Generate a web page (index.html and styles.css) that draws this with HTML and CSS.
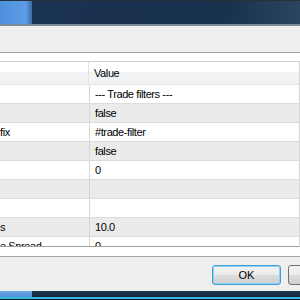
FILE: index.html
```html
<!DOCTYPE html>
<html lang="en">

<head>
    <meta charset="UTF-8">
    <meta name="viewport" content="width=device-width, initial-scale=1.0">
    <link rel="stylesheet" href="styles.css">
</head>

<body>
    <div class="titlebar">
        <div class="title-glow"></div>
        <div class="title-dark"></div>
    </div>

    <div class="toolbar"></div>

    <div class="frame">
        <div class="grid">
            <div class="row header">
                <div class="name"></div>
                <div class="value">Value</div>
            </div>
            <div class="row">
                <div class="name"></div>
                <div class="value">--- Trade filters ---</div>
            </div>
            <div class="row alt">
                <div class="name"></div>
                <div class="value">false</div>
            </div>
            <div class="row">
                <div class="name">fix</div>
                <div class="value">#trade-filter</div>
            </div>
            <div class="row alt">
                <div class="name"></div>
                <div class="value">false</div>
            </div>
            <div class="row">
                <div class="name"></div>
                <div class="value">0</div>
            </div>
            <div class="row alt">
                <div class="name"></div>
                <div class="value"></div>
            </div>
            <div class="row">
                <div class="name"></div>
                <div class="value"></div>
            </div>
            <div class="row alt">
                <div class="name">s</div>
                <div class="value">10.0</div>
            </div>
            <div class="row">
                <div class="name">e Spread</div>
                <div class="value">0</div>
            </div>
        </div>
    </div>

    <div class="buttons">
        <button class="btn default">OK</button>
        <button class="btn">Cancel</button>
    </div>

    <div class="bottombar">
        <div class="bottom-glow"></div>
        <div class="bottom-dark"></div>
    </div>
</body>

</html>
```

FILE: styles.css
```css
/* Page fixed to the crop */
body {
    margin: 0;
    width: 300px;
    height: 300px;
    overflow: hidden;
    background: #efefef;
    font-family: "Liberation Sans", Arial, sans-serif;
    font-size: 11px;
    letter-spacing: -0.4px;
    color: #000;
}

/* Window title bar */
.titlebar {
    display: flex;
    height: 23px;
    border-top: 1px solid #26313d;
    border-bottom: 2px solid #7d8a98;
}

.title-glow {
    width: 32px;
    background: linear-gradient(to right, #4d8fdc, #5d9de6 80%, #3d6aa0);
}

.title-dark {
    flex: 1;
    background: linear-gradient(100deg, #1b3352 0%, #17304c 70%, #2c4662 100%);
}

/* Empty strip above the list */
.toolbar {
    height: 26px;
}

/* White frame round the grid */
.frame {
    background: #fff;
    border-top: 1px solid #a3a3a3;
    border-bottom: 1px solid #a8a8a8;
    padding: 8px 0 9px;
}

.grid {
    height: 184px;
    overflow: hidden;
    border-top: 1px solid #cfcfcf;
    border-bottom: 1px solid #a0a0a0;
    border-right: 1px solid #d4d4d4;
}

.row {
    display: flex;
    height: 18px;
    line-height: 18px;
    border-bottom: 1px solid #dcdcdc;
    background: #fff;
}

.row.alt {
    background: #ebebeb;
}

.row.header {
    height: 22px;
    line-height: 22px;
    border-bottom: 1px solid #e2e3e6;
    background: linear-gradient(to bottom, #fff 0, #fff 45%, #f2f3f5 45%, #f2f3f5 100%);
}

.name {
    width: 89px;
    border-right: 1px solid #d6d6d6;
    white-space: nowrap;
    overflow: hidden;
}

.header .name {
    width: 88px;
    border-right: 1px solid #e3e4e7;
}

.value {
    padding-left: 5px;
    white-space: nowrap;
}

/* Dialog buttons */
.buttons {
    display: flex;
    gap: 7px;
    padding: 8px 0 6px 212px;
}

.btn {
    flex-shrink: 0;
    width: 69px;
    height: 20px;
    padding: 0;
    font-family: "Liberation Sans", Arial, sans-serif;
    font-size: 11px;
    color: #000;
    border: 1px solid #707070;
    border-radius: 3px;
    background: linear-gradient(to bottom, #f2f2f2 0, #ebebeb 50%, #dddddd 50%, #cfcfcf 100%);
}

.btn.default {
    border-color: #3c9fd6;
    box-shadow: inset 0 0 0 1px #8fd2f3;
}

/* Taskbar strip at the bottom */
.bottombar {
    display: flex;
    height: 9px;
}

.bottom-glow {
    width: 32px;
    background: linear-gradient(to bottom, #6aa6e2 0, #4f8fd6 6px, #35b8e0 6px, #35b8e0 8px, #0d1a26 8px);
}

.bottom-dark {
    flex: 1;
    background: linear-gradient(to bottom, #1e3550 0, #15283d 6px, #35b8e0 6px, #35b8e0 8px, #0d1a26 8px);
}
```
